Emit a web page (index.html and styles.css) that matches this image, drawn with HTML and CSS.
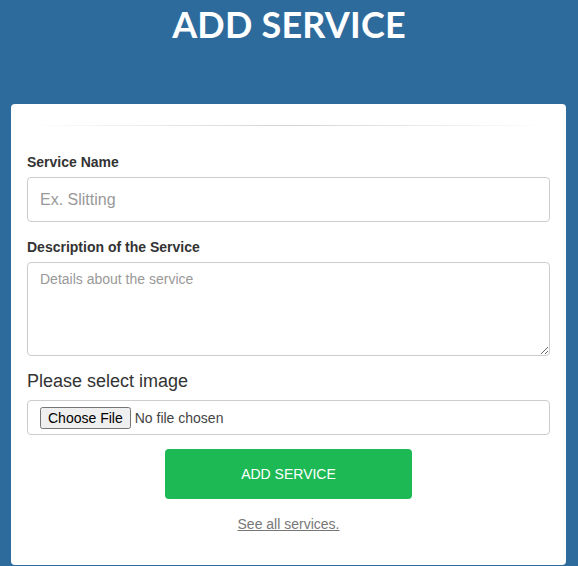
FILE: index.html
```html
<!DOCTYPE html>
<html>
<head>
<meta charset="utf-8">
<link rel="stylesheet" href="styles.css">
</head>
<body>
<header class="page-header">
  <h1 class="page-title">ADD SERVICE</h1>
</header>
<main class="card">
  <hr class="divider">
  <form class="form">
    <div class="form-group">
      <label class="label" for="name">Service Name</label>
      <input class="input" id="name" type="text" placeholder="Ex. Slitting">
    </div>
    <div class="form-group">
      <label class="label" for="desc">Description of the Service</label>
      <textarea class="textarea" id="desc" placeholder="Details about the service"></textarea>
    </div>
    <div class="image-label">Please select image</div>
    <input class="file-input" type="file">
    <button class="submit" type="button">ADD SERVICE</button>
    <div class="link-row"><a class="link" href="#">See all services.</a></div>
  </form>
</main>
</body>
</html>
```
FILE: styles.css
```css
* { box-sizing: border-box; }
html, body { margin: 0; padding: 0; }
body {
  background: #2e6b9d;
  font-family: "Liberation Sans", Arial, sans-serif;
  color: #333;
  width: 578px;
  height: 566px;
  overflow: hidden;
}
.page-header {
  height: 104px;
  display: flex;
  justify-content: center;
}
.page-title {
  margin: 0;
  font-family: Lato, "Open Sans", sans-serif;
  font-weight: 700;
  font-size: 36px;
  line-height: 48px;
  color: #fff;
  letter-spacing: 0.2px;
}
.card {
  margin: 0 12px 0 11px;
  height: 461px;
  background: #fff;
  border-radius: 4px;
  padding: 21px 16px 0;
}
.divider {
  margin: 0;
  border: 0;
  height: 1px;
  background: linear-gradient(to right, rgba(204,204,204,0), #d4d4d4 50%, rgba(204,204,204,0));
}
.form {
  padding-top: 26px;
  display: flex;
  flex-direction: column;
}
.form-group { margin-bottom: 15px; display: flex; flex-direction: column; }
.label {
  font-weight: 700;
  font-size: 14px;
  line-height: 20px;
  margin-bottom: 5px;
}
.input {
  height: 45px;
  border: 1px solid #ccc;
  border-radius: 4px;
  padding: 0 12px;
  font-family: "Liberation Sans", Arial, sans-serif;
  font-size: 16px;
  color: #555;
}
.input::placeholder, .textarea::placeholder { color: #999; }
.textarea {
  height: 94px;
  border: 1px solid #ccc;
  border-radius: 4px;
  padding: 6px 12px;
  font-family: "Liberation Sans", Arial, sans-serif;
  font-size: 14px;
  line-height: 20px;
  color: #555;
}
.image-label {
  font-size: 18px;
  line-height: 20px;
  margin-bottom: 9px;
}
.file-input {
  height: 35px;
  border: 1px solid #ccc;
  border-radius: 4px;
  padding: 6px 12px;
  font-family: "Liberation Sans", Arial, sans-serif;
  font-size: 14px;
  color: #444;
}
.submit {
  align-self: center;
  margin-top: 14px;
  width: 247px;
  height: 50px;
  background: #1db954;
  border: 0;
  border-radius: 4px;
  color: #fff;
  font-family: "Liberation Sans", Arial, sans-serif;
  font-size: 14px;
}
.link-row {
  margin-top: 15px;
  text-align: center;
  font-size: 14px;
  line-height: 20px;
}
.link { color: #777; text-decoration: underline; }
```
